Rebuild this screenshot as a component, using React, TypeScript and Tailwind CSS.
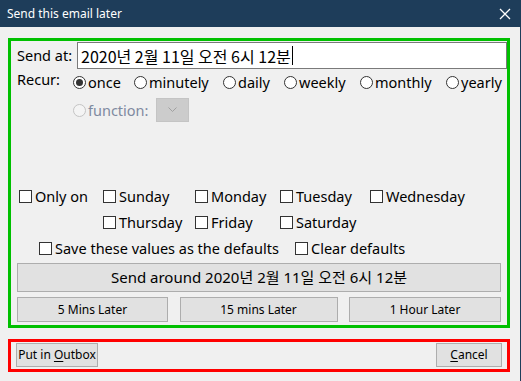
import React from "react";

function Radio({ checked, disabled, label }: { checked?: boolean; disabled?: boolean; label: string }) {
  return (
    <div className="flex items-center">
      <span
        className={
          disabled
            ? "w-[13px] h-[13px] rounded-full border border-[#c4c4c4] bg-[#f4f4f4] shrink-0"
            : "w-[13px] h-[13px] rounded-full border border-[#333333] bg-white flex items-center justify-center shrink-0"
        }
      >
        {checked && <span className="w-[7px] h-[7px] rounded-full bg-[#333333]" />}
      </span>
      <span className={disabled ? "ml-[2px] text-[#7f8aa0] whitespace-nowrap" : "ml-[2px] text-black whitespace-nowrap"}>{label}</span>
    </div>
  );
}

function Check({ label }: { label: string }) {
  return (
    <div className="flex items-center">
      <span className="w-[13px] h-[13px] border border-[#333333] bg-white shrink-0" />
      <span className="ml-[3px] text-black whitespace-nowrap">{label}</span>
    </div>
  );
}

export default function App() {
  return (
    <div className="w-[521px] h-[381px] bg-[#f0f0f0] font-['Noto_Sans','Noto_Sans_CJK_KR',sans-serif] text-[14px] leading-none border-r border-[#1e3d5a] overflow-hidden">
      <div className="h-[27px] bg-[#1e3d5a] flex items-center justify-between pl-[7px] pr-[9px]">
        <span className="text-white text-[12px]">Send this email later</span>
        <svg width="12" height="12" viewBox="0 0 12 12">
          <path d="M1 1 L11 11 M11 1 L1 11" stroke="white" strokeWidth="1.3" />
        </svg>
      </div>

      <div className="ml-[8px] mt-[11px] w-[502px] h-[290px] border-[3px] border-[#00c000] flex flex-col">
        <div className="flex items-center mt-[1px] h-[27px]">
          <span className="ml-[6px] w-[60px] text-[14.5px]">Send at:</span>
          <div className="flex-1 h-[27px] border border-[#7a7a7a] bg-white flex items-center pl-[3px] font-['Noto_Sans_CJK_KR','Noto_Sans',sans-serif] text-[16px]">
            2020년 2월 11일 오전 6시 12분
            <span className="ml-[1px] w-[1px] h-[19px] bg-black" />
          </div>
        </div>

        <div className="flex items-center h-[20px] mt-[3px] text-[14.5px]">
          <span className="ml-[6px] w-[56px] self-start">Recur:</span>
          <div className="w-[61px]"><Radio checked label="once" /></div>
          <div className="w-[89px]"><Radio label="minutely" /></div>
          <div className="w-[61px]"><Radio label="daily" /></div>
          <div className="w-[76px]"><Radio label="weekly" /></div>
          <div className="w-[86px]"><Radio label="monthly" /></div>
          <div><Radio label="yearly" /></div>
        </div>

        <div className="flex items-center h-[24px] mt-[6px] text-[14.5px]">
          <div className="ml-[62px] w-[83px]"><Radio disabled label="function:" /></div>
          <div className="w-[33px] h-[24px] bg-[#cccccc] border border-[#c4c4c4] flex items-center justify-center">
            <svg width="9" height="6" viewBox="0 0 9 6">
              <path d="M0.5 0.5 L4.5 4.5 L8.5 0.5" stroke="#a0a0a0" strokeWidth="1" fill="none" />
            </svg>
          </div>
        </div>

        <div className="flex items-center h-[20px] mt-[64px] text-[14.5px]">
          <div className="ml-[8px] w-[84px]"><Check label="Only on" /></div>
          <div className="w-[92px]"><Check label="Sunday" /></div>
          <div className="w-[85px]"><Check label="Monday" /></div>
          <div className="w-[90px]"><Check label="Tuesday" /></div>
          <div><Check label="Wednesday" /></div>
        </div>

        <div className="flex items-center h-[20px] mt-[6px] text-[14.5px]">
          <div className="ml-[92px] w-[92px]"><Check label="Thursday" /></div>
          <div className="w-[85px]"><Check label="Friday" /></div>
          <div><Check label="Saturday" /></div>
        </div>

        <div className="flex items-center h-[20px] mt-[6px] text-[14.5px]">
          <div className="ml-[28px] w-[256px]"><Check label="Save these values as the defaults" /></div>
          <div><Check label="Clear defaults" /></div>
        </div>

        <button className="mx-[6px] mt-[5px] h-[29px] border border-[#adadad] bg-[#e1e1e1] text-[15px] text-black flex items-center justify-center font-['Noto_Sans','Noto_Sans_CJK_KR',sans-serif]">
          Send around 2020년 2월 11일 오전 6시 12분
        </button>

        <div className="flex mx-[6px] mt-[5px] h-[25px] text-[12px] justify-between">
          <button className="w-[151px] h-[25px] border border-[#adadad] bg-[#e1e1e1] text-black">5 Mins Later</button>
          <button className="w-[158px] h-[25px] border border-[#adadad] bg-[#e1e1e1] text-black">15 mins Later</button>
          <button className="w-[152px] h-[25px] border border-[#adadad] bg-[#e1e1e1] text-black">1 Hour Later</button>
        </div>
      </div>

      <div className="ml-[8px] mt-[11px] w-[502px] h-[33px] border-[3px] border-[#ff0000] flex items-start justify-between pt-[1px] pl-[5px] pr-[5px] text-[12px]">
        <button className="w-[82px] h-[24px] border border-[#adadad] bg-[#e1e1e1] text-black whitespace-nowrap">
          Put in <span className="underline underline-offset-2">O</span>utbox
        </button>
        <button className="w-[66px] h-[24px] border border-[#adadad] bg-[#e1e1e1] text-black whitespace-nowrap">
          <span className="underline underline-offset-2">C</span>ancel
        </button>
      </div>
    </div>
  );
}
